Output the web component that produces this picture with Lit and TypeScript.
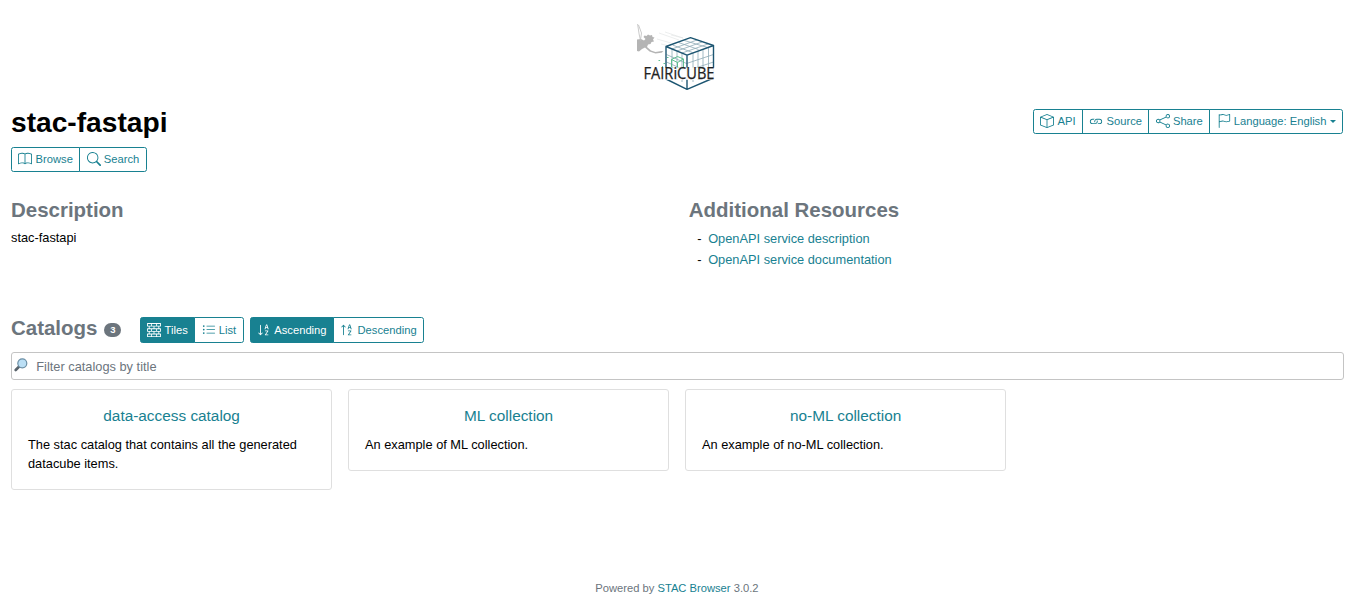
import { LitElement, html, css, svg } from "lit";
import { customElement, property } from "lit/decorators.js";
import { classMap } from "lit/directives/class-map.js";

const ICONS: Record<string, string[]> = {
  box: ["M8.186 1.113a.5.5 0 0 0-.372 0L1.846 3.5 8 5.961 14.154 3.5 8.186 1.113zM15 4.239l-6.5 2.6v7.922l6.5-2.6V4.24zM7.5 14.762V6.838L1 4.239v7.923l6.5 2.6zM7.443.184a1.5 1.5 0 0 1 1.114 0l7.129 2.852A.5.5 0 0 1 16 3.5v8.662a1 1 0 0 1-.629.928l-7.185 2.874a.5.5 0 0 1-.372 0L.63 13.09a1 1 0 0 1-.63-.928V3.5a.5.5 0 0 1 .314-.464L7.443.184z"],
  book: ["M1 2.828c.885-.37 2.154-.769 3.388-.893 1.33-.134 2.458.063 3.112.752v9.746c-.935-.53-2.12-.603-3.213-.493-1.18.12-2.37.461-3.287.811V2.828zm7.5-.141c.654-.689 1.782-.886 3.112-.752 1.234.124 2.503.523 3.388.893v9.923c-.918-.35-2.107-.692-3.287-.81-1.094-.111-2.278-.039-3.213.492V2.687zM8 1.783C7.015.936 5.587.81 4.287.94c-1.514.153-3.042.672-3.994 1.105A.5.5 0 0 0 0 2.5v11a.5.5 0 0 0 .707.455c.882-.4 2.303-.881 3.68-1.02 1.409-.142 2.59.087 3.223.877a.5.5 0 0 0 .78 0c.633-.79 1.814-1.019 3.222-.877 1.378.139 2.8.62 3.681 1.02A.5.5 0 0 0 16 13.5v-11a.5.5 0 0 0-.293-.455c-.952-.433-2.48-.952-3.994-1.105C10.413.809 8.985.936 8 1.783z"],
  search: ["M11.742 10.344a6.5 6.5 0 1 0-1.397 1.398h-.001c.03.04.062.078.098.115l3.85 3.85a1 1 0 0 0 1.415-1.414l-3.85-3.85a1.007 1.007 0 0 0-.115-.1zM12 6.5a5.5 5.5 0 1 1-11 0 5.5 5.5 0 0 1 11 0z"],
  link: [
    "M6.354 5.5H4a3 3 0 0 0 0 6h3a3 3 0 0 0 2.83-4H9c-.086 0-.17.01-.25.031A2 2 0 0 1 7 10.5H4a2 2 0 1 1 0-4h1.535c.218-.376.495-.714.82-1z",
    "M9 5.5a3 3 0 0 0-2.83 4h1.098A2 2 0 0 1 9 6.5h3a2 2 0 1 1 0 4h-1.535a4.02 4.02 0 0 1-.82 1H12a3 3 0 1 0 0-6H9z",
  ],
  share: ["M13.5 1a1.5 1.5 0 1 0 0 3 1.5 1.5 0 0 0 0-3zM11 2.5a2.5 2.5 0 1 1 .603 1.628l-6.718 3.12a2.499 2.499 0 0 1 0 1.504l6.718 3.12a2.5 2.5 0 1 1-.488.876l-6.718-3.12a2.5 2.5 0 1 1 0-3.256l6.718-3.12A2.5 2.5 0 0 1 11 2.5zm-8.5 4a1.5 1.5 0 1 0 0 3 1.5 1.5 0 0 0 0-3zm11 5.5a1.5 1.5 0 1 0 0 3 1.5 1.5 0 0 0 0-3z"],
  flag: ["M14.778.085A.5.5 0 0 1 15 .5V8a.5.5 0 0 1-.314.464L14.5 8l.186.464-.003.001-.006.003-.023.009a12.435 12.435 0 0 1-.397.15c-.264.095-.631.223-1.047.35-.816.252-1.879.523-2.71.523-.847 0-1.548-.28-2.158-.525l-.028-.01C7.68 8.71 7.14 8.5 6.5 8.5c-.7 0-1.638.23-2.437.477A19.626 19.626 0 0 0 3 9.342V15.5a.5.5 0 0 1-1 0V.5a.5.5 0 0 1 1 0v.282c.226-.079.496-.17.79-.26C4.606.272 5.67 0 6.5 0c.84 0 1.524.277 2.121.519l.043.018C9.286.788 9.828 1 10.5 1c.7 0 1.638-.23 2.437-.477a19.587 19.587 0 0 0 1.349-.476l.019-.007.004-.002h.001M14 1.221c-.22.078-.48.167-.766.255-.81.252-1.872.523-2.734.523-.886 0-1.592-.286-2.203-.534l-.008-.003C7.662 1.21 7.139 1 6.5 1c-.669 0-1.606.229-2.415.478A21.294 21.294 0 0 0 3 1.845v6.433c.22-.078.48-.167.766-.255C4.576 7.77 5.638 7.5 6.5 7.5c.847 0 1.548.28 2.158.525l.028.01C9.32 8.29 9.86 8.5 10.5 8.5c.668 0 1.606-.229 2.415-.478A21.317 21.317 0 0 0 14 7.655V1.222z"],
  bricks: ["M0 .5A.5.5 0 0 1 .5 0h15a.5.5 0 0 1 .5.5v3a.5.5 0 0 1-.5.5H14v2h1.5a.5.5 0 0 1 .5.5v3a.5.5 0 0 1-.5.5H14v2h1.5a.5.5 0 0 1 .5.5v3a.5.5 0 0 1-.5.5H.5a.5.5 0 0 1-.5-.5v-3a.5.5 0 0 1 .5-.5H2v-2H.5a.5.5 0 0 1-.5-.5v-3A.5.5 0 0 1 .5 6H2V4H.5a.5.5 0 0 1-.5-.5v-3zM3 4v2h4.5V4H3zm5.5 0v2H13V4H8.5zM3 10v2h4.5v-2H3zm5.5 0v2H13v-2H8.5zM1 1v2h3.5V1H1zm4.5 0v2h5V1h-5zm6 0v2H15V1h-3.5zM1 7v2h3.5V7H1zm4.5 0v2h5V7h-5zm6 0v2H15V7h-3.5zM1 13v2h3.5v-2H1zm4.5 0v2h5v-2h-5zm6 0v2H15v-2h-3.5z"],
  list: ["M5 11.5a.5.5 0 0 1 .5-.5h9a.5.5 0 0 1 0 1h-9a.5.5 0 0 1-.5-.5zm0-4a.5.5 0 0 1 .5-.5h9a.5.5 0 0 1 0 1h-9a.5.5 0 0 1-.5-.5zm0-4a.5.5 0 0 1 .5-.5h9a.5.5 0 0 1 0 1h-9a.5.5 0 0 1-.5-.5zm-3 1a1 1 0 1 0 0-2 1 1 0 0 0 0 2zm0 4a1 1 0 1 0 0-2 1 1 0 0 0 0 2zm0 4a1 1 0 1 0 0-2 1 1 0 0 0 0 2z"],
  down: [
    "M10.082 5.629 9.664 7H8.598l1.789-5.332h1.234L13.402 7h-1.12l-.419-1.371h-1.781zm1.57-.785L11 2.687h-.047l-.652 2.157h1.351z",
    "M12.96 14H9.028v-.691l2.579-3.72v-.054H9.098v-.867h3.785v.691l-2.567 3.72v.054h2.645V14zM4.5 2.5a.5.5 0 0 0-1 0v9.793l-1.146-1.147a.5.5 0 0 0-.708.708l2 1.999.007.007a.497.497 0 0 0 .7-.006l2-2a.5.5 0 0 0-.707-.708L4.5 12.293V2.5z",
  ],
  up: [
    "M10.082 5.629 9.664 7H8.598l1.789-5.332h1.234L13.402 7h-1.12l-.419-1.371h-1.781zm1.57-.785L11 2.687h-.047l-.652 2.157h1.351z",
    "M12.96 14H9.028v-.691l2.579-3.72v-.054H9.098v-.867h3.785v.691l-2.567 3.72v.054h2.645V14zM4.5 13.5a.5.5 0 0 1-1 0V3.707L2.354 4.854a.5.5 0 1 1-.708-.708l2-1.999.007-.007a.498.498 0 0 1 .7.006l2 2a.5.5 0 1 1-.707.708L4.5 3.707V13.5z",
  ],
};

interface Action {
  icon: string;
  label: string;
  active?: boolean;
  caret?: boolean;
}

@customElement("button-group")
class ButtonGroup extends LitElement {
  @property({ attribute: false }) items: Action[] = [];

  static styles = css`
    :host { display: inline-flex; }
    .btn {
      display: flex; align-items: center; box-sizing: border-box; height: 25.2px;
      margin: 0 0 0 -1px; padding: 0 6.4px; border: 1px solid #188191;
      font: 11.2px/16.8px "Liberation Sans", Arial, sans-serif;
      color: #188191; background: #fff; white-space: pre;
    }
    .btn:first-child { margin-left: 0; border-radius: 2.56px 0 0 2.56px; }
    .btn:last-child { border-radius: 0 2.56px 2.56px 0; }
    .active { background: #188191; color: #fff; }
    .icon { width: 14px; height: 14px; fill: currentColor; margin: 0 3.2px var(--icon-lift, 1px) 0; flex: none; }
    .caret {
      margin-left: 3.2px; border-top: 3.36px solid; border-left: 3.36px solid transparent;
      border-right: 3.36px solid transparent;
    }
  `;

  render() {
    return this.items.map(
      (item) => html`<button class=${classMap({ btn: true, active: !!item.active })}><svg class="icon" viewBox="0 0 16 16">${ICONS[item.icon].map((d) => svg`<path fill-rule="evenodd" d=${d}></path>`)}</svg><span>${item.label}</span>${item.caret ? html`<span class="caret"></span>` : ""}</button>`
    );
  }
}

@customElement("cube-logo")
class CubeLogo extends LitElement {
  static styles = css`
    :host { display: block; width: 80px; height: 80px; }
    .logo { display: block; width: 80px; height: 80px; overflow: visible; }
    .word { font: 500 15.5px "Open Sans", "Noto Sans", sans-serif; fill: #222; stroke: #222; stroke-width: .25; }
  `;

  render() {
    return html`<svg class="logo" viewBox="0 0 80 80">
      <g fill="none" stroke="#dfe3e3" stroke-width=".6">
        <path d="M22 13l20 7M28 12l18 6M20 19l14 4M34 15l12 3M24 24l8 2"/>
      </g>
      <g fill="#b4b4b4">
        <path d="M0 19.500l4-.5 3 1.500 1.500-1.500L6.500 17l1-1.500 2 .5 1.500-1.500 2 1 2-.5 .5 2 2 .5-1.500 2 1 2-2.500 .5-1 2-2.500 .5-1 2.500 4 3.500 4.500 1.500 6-1 2 .3-2 1.500-6 .7-6-2-4.500-4-3 1.500-3 2.500-2-.5z"/>
        <path d="M.6 4l1.500 10 1.500 7M1.500 5l3 8-1 7" fill="none" stroke="#bcbcbc" stroke-width=".8"/>
      </g>
      <g fill="none" stroke="#8eabb6" stroke-width=".8">
        <path d="M35.500 25l20 7.500M41.500 22.500l20 7M47.500 20.500l23 7M35 29l25-9M40 31l25-9M45 33l26-9M35 29v29M40 31v29M45 33v29M56 33v29M61 31v29M66 29v29M71.500 27v29M29.500 34.500l20 9 27-9M29.500 42l20 9 27-9M29.500 50l20 9 27-9"/>
      </g>
      <g fill="none" stroke="#1d5672" stroke-width="1.400" stroke-linejoin="round">
        <path d="M29 26.500L53.500 17.700l23 7.800L50 35.200zM29 26.500V59L50 69.300l26.500-11.300V25.500M50 35.200v34"/>
      </g>
      <g fill="none" stroke="#4fba86" stroke-width=".9">
        <path d="M34.500 39.500l6-3 6 2.500-6 3.500zM34.500 39.500v7.500l6 3 6-3v-8M40.500 42.500v7M21.500 40.500h1.600M26.500 43.500h1.600M30 37.500h1.500M25 46.500h1"/>
      </g>
      <path d="M5 47.500h73.700v12.300H5z" fill="#fff" opacity=".93"/>
      <text class="word" x="6.500" y="58.900" textLength="71" lengthAdjust="spacingAndGlyphs">FAIRiCUBE</text>
    </svg>`;
  }
}

@customElement("app-root")
class AppRoot extends LitElement {
  static styles = css`
    :host {
      display: flex; flex-direction: column; box-sizing: border-box; height: 608px;
      padding: 12px 10.200px 0 11px; background: #fff; color: #000;
      font: 12.8px/19.2px "Liberation Sans", Arial, sans-serif; overflow: hidden;
    }
    h1, h2, h3, p, ul { margin: 0; padding: 0; }
    a { color: #188191; text-decoration: none; }
    .brand { display: flex; justify-content: center; height: 97px; padding-top: 8px; box-sizing: border-box; }
    .head { display: flex; justify-content: space-between; align-items: flex-start; height: 38px; padding-right: .8px; }
    h1 { font-size: 28.160px; line-height: 28px; }
    h2 { font-size: 20.480px; line-height: 24px; color: #6c757d; }
    .info { display: grid; grid-template-columns: 1fr 1fr; height: 119px; margin-top: 26px; }
    .description { margin-top: 5.500px; }
    .resources { padding-left: 11.400px; }
    .links { list-style: none; margin-top: 6px; padding-left: 8.500px; }
    .links li { display: flex; gap: 6.600px; line-height: 21px; }
    .bar { display: flex; height: 35px; align-items: flex-start; --icon-lift: 0px; }
    .bar h2 { line-height: 22px; }
    .bar button-group { padding-top: .2px; }
    .count {
      display: block; width: 17px; height: 14px; margin: 6px 18.500px 0 7px; border-radius: 7px;
      background: #6c757d; color: #fff; font-size: 9.500px; font-weight: 700; line-height: 14px; text-align: center;
    }
    .gap { margin-right: 6.200px; }
    .filter {
      display: flex; align-items: center; box-sizing: border-box; height: 28px; flex: none;
      border: 1px solid #c4c4c4; border-radius: 3px; color: #6c757d;
    }
    .lens { width: 14px; height: 14px; margin: 0 8.300px 2px 2px; }
    .cards { display: grid; grid-template-columns: repeat(3, 321px); gap: 16px; align-items: start; margin-top: 9px; }
    .card { border: 1px solid #dfdfdf; border-radius: 3px; padding: 16px 15.800px 15.400px 16px; }
    .card h3 { font-size: 15.360px; line-height: 19px; font-weight: 400; text-align: center; margin-bottom: 10px; }
    .foot { margin-top: auto; padding: 0 1px 11px 0; font-size: 11.200px; line-height: 17px; text-align: center; color: #6c757d; }
  `;

  private cards = [
    { title: "data-access catalog", text: "The stac catalog that contains all the generated datacube items." },
    { title: "ML collection", text: "An example of ML collection." },
    { title: "no-ML collection", text: "An example of no-ML collection." },
  ];

  render() {
    return html`
      <div class="brand"><cube-logo></cube-logo></div>
      <header class="head">
        <h1>stac-fastapi</h1>
        <button-group .items=${[
          { icon: "box", label: "API" },
          { icon: "link", label: "Source" },
          { icon: "share", label: "Share" },
          { icon: "flag", label: "Language: English", caret: true },
        ]}></button-group>
      </header>
      <nav><button-group .items=${[
        { icon: "book", label: "Browse" },
        { icon: "search", label: "Search" },
      ]}></button-group></nav>
      <section class="info">
        <div>
          <h2>Description</h2>
          <p class="description">stac-fastapi</p>
        </div>
        <div class="resources">
          <h2>Additional Resources</h2>
          <ul class="links">
            <li><span>-</span><a>OpenAPI service description</a></li>
            <li><span>-</span><a>OpenAPI service documentation</a></li>
          </ul>
        </div>
      </section>
      <div class="bar">
        <h2>Catalogs</h2><span class="count">3</span>
        <button-group class="gap" .items=${[
          { icon: "bricks", label: "Tiles", active: true },
          { icon: "list", label: "List" },
        ]}></button-group>
        <button-group .items=${[
          { icon: "down", label: "Ascending", active: true },
          { icon: "up", label: "Descending" },
        ]}></button-group>
      </div>
      <div class="filter">
        <svg class="lens" viewBox="0 0 14 14">
          <path d="M1.700 12l3.500-3.500" stroke="#59636b" stroke-width="2.600" stroke-linecap="round"/>
          <circle cx="8.300" cy="5.300" r="4.500" fill="#bbdff5" stroke="#6c8fa5" stroke-width="1.200"/>
        </svg>
        <span>Filter catalogs by title</span>
      </div>
      <div class="cards">
        ${this.cards.map((c) => html`<article class="card"><h3><a>${c.title}</a></h3><p>${c.text}</p></article>`)}
      </div>
      <footer class="foot">Powered by <a>STAC Browser</a> 3.0.2</footer>
    `;
  }
}
